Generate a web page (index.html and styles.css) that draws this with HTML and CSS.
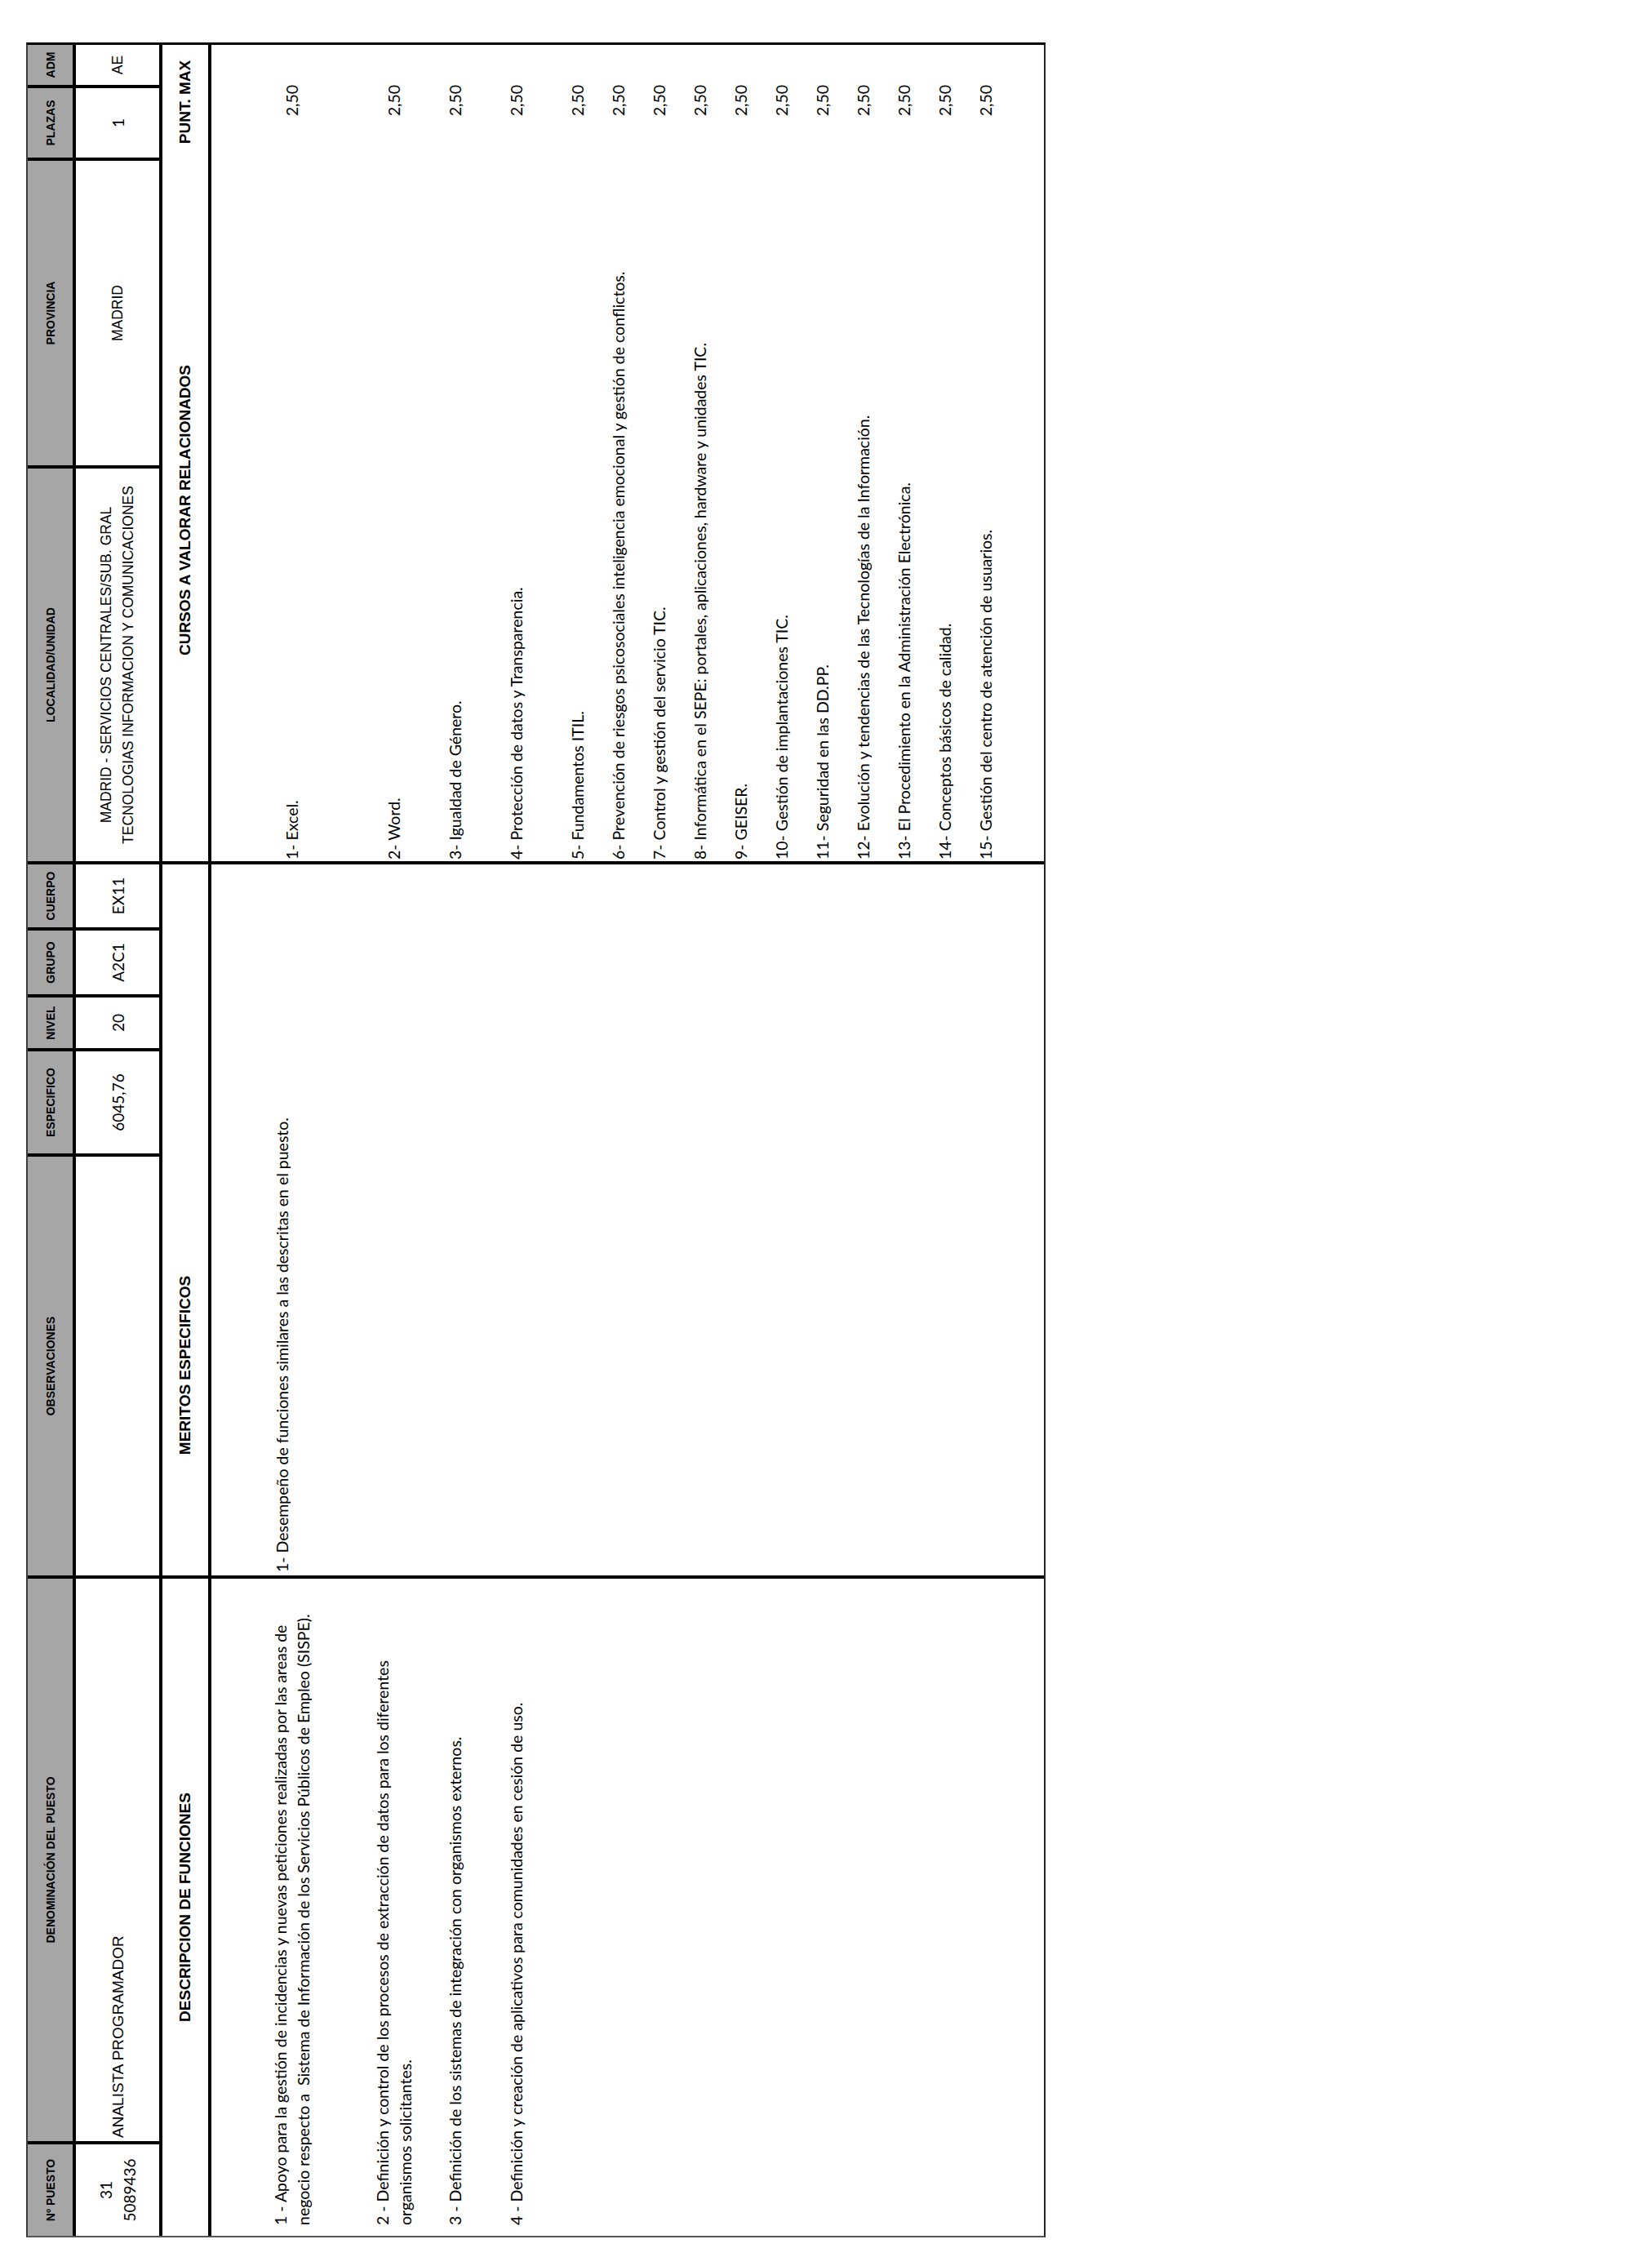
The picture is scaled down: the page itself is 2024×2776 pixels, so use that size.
FILE: index.html
```html
<!DOCTYPE html>
<html lang="es">
<head>
<meta charset="utf-8">
<title>Puesto 31 - Analista Programador</title>
<link rel="stylesheet" href="styles.css">
</head>
<body>
<div class="page">
  <div class="sheet">
    <div class="row head cols11">
      <div class="cell">Nº PUESTO</div>
      <div class="cell">DENOMINACIÓN DEL PUESTO</div>
      <div class="cell">OBSERVACIONES</div>
      <div class="cell">ESPECIFICO</div>
      <div class="cell">NIVEL</div>
      <div class="cell">GRUPO</div>
      <div class="cell">CUERPO</div>
      <div class="cell">LOCALIDAD/UNIDAD</div>
      <div class="cell">PROVINCIA</div>
      <div class="cell">PLAZAS</div>
      <div class="cell">ADM</div>
    </div>
    <div class="row data cols11">
      <div class="cell num">31<br>5089436</div>
      <div class="cell arial left big">ANALISTA PROGRAMADOR</div>
      <div class="cell"></div>
      <div class="cell num">6045,76</div>
      <div class="cell num">20</div>
      <div class="cell num">A2C1</div>
      <div class="cell num">EX11</div>
      <div class="cell arial two">MADRID - SERVICIOS CENTRALES/SUB. GRAL<br>TECNOLOGIAS INFORMACION Y COMUNICACIONES</div>
      <div class="cell arial">MADRID</div>
      <div class="cell num">1</div>
      <div class="cell arial">AE</div>
    </div>
    <div class="row sect cols3">
      <div class="area">
        <div class="label full">DESCRIPCION DE FUNCIONES</div>
      </div>
      <div class="area">
        <div class="label obs">MERITOS ESPECIFICOS</div>
      </div>
      <div class="area split">
        <div class="label cur">CURSOS A VALORAR RELACIONADOS</div>
        <div class="label pts">PUNT. MAX</div>
      </div>
    </div>
    <div class="row content cols3">
      <div class="area list desc">
        <div class="item r1">1 - Apoyo para la gestión de incidencias y nuevas peticiones realizadas por las areas de<br>negocio respecto a&nbsp; Sistema de Información de los Servicios Públicos de Empleo (SISPE).</div>
        <div class="item r2">2 - Definición y control de los procesos de extracción de datos para los diferentes<br>organismos solicitantes.</div>
        <div class="item r3">3 - Definición de los sistemas de integración con organismos externos.</div>
        <div class="item r4">4 - Definición y creación de aplicativos para comunidades en cesión de uso.</div>
      </div>
      <div class="area list merit">
        <div class="item r1 up">1- Desempeño de funciones similares a las descritas en el puesto.</div>
      </div>
      <div class="area list courses">
        <div class="item">1- Excel.</div><div class="pt">2,50</div>
        <div class="item">2- Word.</div><div class="pt">2,50</div>
        <div class="item">3- Igualdad de Género.</div><div class="pt">2,50</div>
        <div class="item">4- Protección de datos y Transparencia.</div><div class="pt">2,50</div>
        <div class="item">5- Fundamentos ITIL.</div><div class="pt">2,50</div>
        <div class="item">6- Prevención de riesgos psicosociales inteligencia emocional y gestión de conflictos.</div><div class="pt">2,50</div>
        <div class="item">7- Control y gestión del servicio TIC.</div><div class="pt">2,50</div>
        <div class="item">8- Informática en el SEPE: portales, aplicaciones, hardware y unidades TIC.</div><div class="pt">2,50</div>
        <div class="item">9- GEISER.</div><div class="pt">2,50</div>
        <div class="item">10- Gestión de implantaciones TIC.</div><div class="pt">2,50</div>
        <div class="item">11- Seguridad en las DD.PP.</div><div class="pt">2,50</div>
        <div class="item">12- Evolución y tendencias de las Tecnologías de la Información.</div><div class="pt">2,50</div>
        <div class="item">13- El Procedimiento en la Administración Electrónica.</div><div class="pt">2,50</div>
        <div class="item">14- Conceptos básicos de calidad.</div><div class="pt">2,50</div>
        <div class="item">15- Gestión del centro de atención de usuarios.</div><div class="pt">2,50</div>
      </div>
    </div>
  </div>
</div>
</body>
</html>
```
FILE: styles.css
```css
html, body {
  margin: 0;
  padding: 0;
  background: #fff;
  overflow: hidden;
}

.page {
  width: 2024px;
  height: 2776px;
  box-sizing: border-box;
  padding: 52px 0 0 32px;
}

/* The sheet is laid out in landscape and turned a quarter turn, as in the printed form */
.sheet {
  width: 2689px;
  height: 1249px;
  box-sizing: border-box;
  border-top: 2px solid #3c3c3c;
  border-left: 2px solid #555;
  border-right: 3px solid #000;
  border-bottom: 2px solid #222;
  background: #000;
  display: flex;
  flex-direction: column;
  gap: 4px;
  transform-origin: 0 0;
  transform: translateY(2689px) rotate(-90deg);
  color: #000;
}

.row {
  display: grid;
  column-gap: 4px;
  flex: none;
}

.cols11 {
  grid-template-columns: 112px 689px 513px 125px 62px 78px 77px 481px 373px 85px 49px;
}

.cols3 {
  grid-template-columns: 805px 871px 1000px;
}

.head { height: 55px; }
.data { height: 102px; }
.sect { height: 56px; }
.content { height: 1020px; }

.cell {
  display: flex;
  align-items: center;
  justify-content: center;
  text-align: center;
  background: #fff;
  white-space: nowrap;
}

.head .cell {
  background: #a6a6a6;
  font-family: "Liberation Sans", Arial, sans-serif;
  font-weight: bold;
  font-size: 14px;
  letter-spacing: 0;
}

.data .cell {
  font-family: "Lato", "Liberation Sans", sans-serif;
  font-size: 19px;
  line-height: 29px;
}

.data .arial {
  font-family: "Liberation Sans", Arial, sans-serif;
  font-size: 17.5px;
  line-height: 27px;
}

.data .big {
  font-size: 19px;
}

.data .left {
  justify-content: flex-start;
  text-align: left;
  padding-left: 4px;
}

.area {
  background: #fff;
}

.sect .area {
  display: flex;
  align-items: center;
}

.label {
  font-family: "Liberation Sans", Arial, sans-serif;
  font-weight: bold;
  font-size: 19px;
  text-align: center;
  white-space: nowrap;
}

.label.full { width: 100%; }
.label.obs { width: 515px; }
.label.cur { width: 860px; }
.label.pts { width: 140px; }

.list {
  display: grid;
  align-content: start;
  align-items: center;
  padding-top: 24px;
  grid-template-rows: 150px 100px 50px 100px repeat(11, 50px);
  font-family: "Lato", "Liberation Sans", sans-serif;
  font-size: 19.5px;
  line-height: 28px;
  white-space: nowrap;
}

.desc { padding-left: 13px; }
.merit { padding-left: 4px; }
.merit .up { margin-bottom: 25px; }

.courses {
  grid-template-columns: 860px 140px;
  padding-left: 2px;
}

.courses .pt {
  text-align: center;
}
```
